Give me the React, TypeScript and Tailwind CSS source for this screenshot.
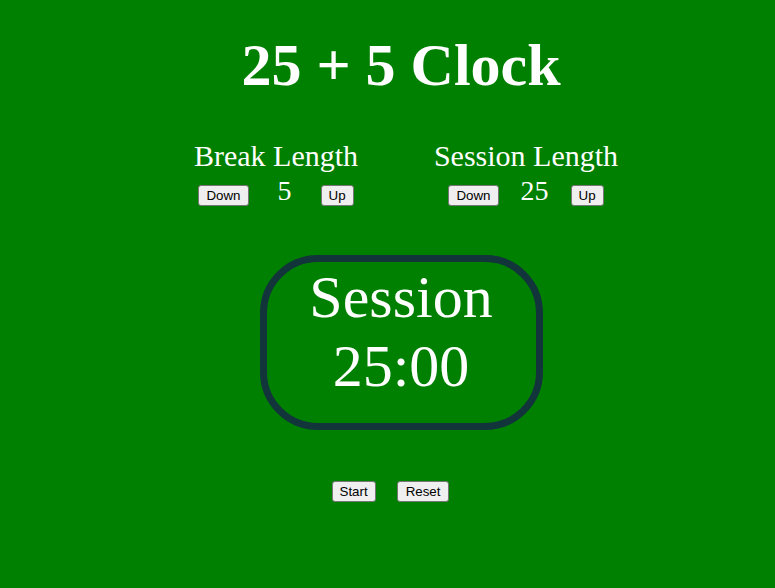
import React, { useState } from 'react';

const btn =
  "bg-[#efefef] border border-[#767676] rounded-[3px] px-[7px] py-[2px] text-[13.33px] leading-[15px] text-black font-['Liberation_Sans',Arial,sans-serif] hover:bg-[#e5e5e5]";

function LengthControl({ label, value, onDown, onUp }: { label: string; value: number; onDown: () => void; onUp: () => void }) {
  return (
    <div className="w-[250px] flex flex-col items-center">
      <div className="text-[30px] leading-[1.15]">{label}</div>
      <div className="mt-[1px] flex items-baseline">
        <button className={btn} onClick={onDown}>Down</button>
        <span className="w-[72px] text-center text-[28px] leading-[1.15]">{value}</span>
        <button className={btn} onClick={onUp}>Up</button>
      </div>
    </div>
  );
}

export default function App() {
  const [breakLen, setBreakLen] = useState(5);
  const [sessionLen, setSessionLen] = useState(25);

  const clamp = (n: number) => Math.min(60, Math.max(1, n));

  return (
    <div className="min-h-screen bg-[#008000] text-white font-['Liberation_Serif','Times_New_Roman',serif] pl-[27px] pt-[31px] flex flex-col items-center">
      <h1 className="text-[60px] leading-[1.15] font-bold">25 + 5 Clock</h1>

      <div className="mt-[39px] flex justify-center">
        <LengthControl
          label="Break Length"
          value={breakLen}
          onDown={() => setBreakLen(clamp(breakLen - 1))}
          onUp={() => setBreakLen(clamp(breakLen + 1))}
        />
        <LengthControl
          label="Session Length"
          value={sessionLen}
          onDown={() => setSessionLen(clamp(sessionLen - 1))}
          onUp={() => setSessionLen(clamp(sessionLen + 1))}
        />
      </div>

      <div className="mt-[48px] w-[283px] h-[175px] border-[7px] border-[#12343b] rounded-[58px] flex flex-col items-center pt-[1px]">
        <div className="text-[60px] leading-[1.15]">Session</div>
        <div className="text-[60px] leading-[1.15]">{String(sessionLen).padStart(2, '0')}:00</div>
      </div>

      <div className="mt-[51px] flex gap-[21px] pr-[21px]">
        <button className={btn}>Start</button>
        <button className={`${btn} px-[8px]`}>Reset</button>
      </div>
    </div>
  );
}
